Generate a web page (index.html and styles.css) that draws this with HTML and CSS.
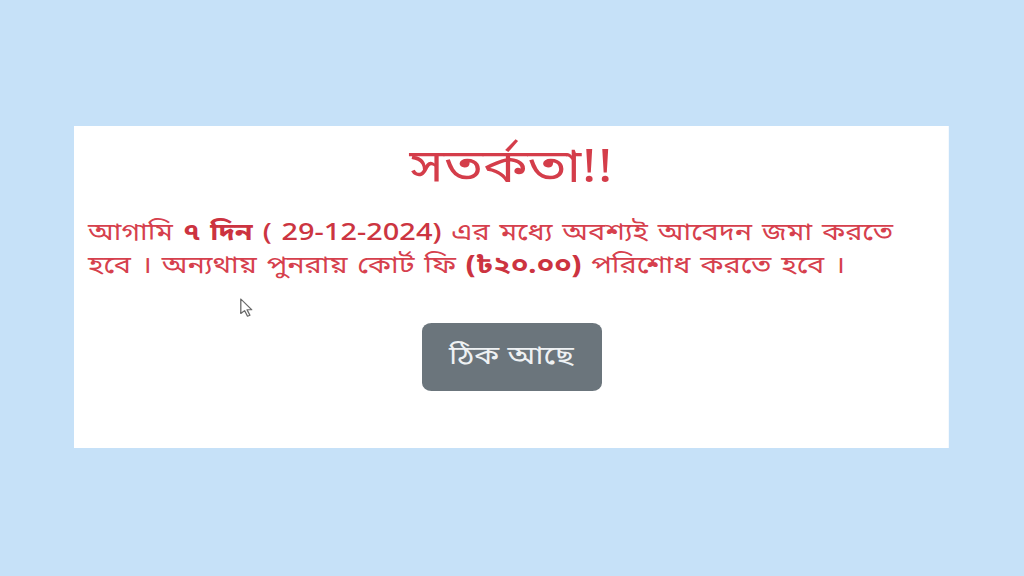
FILE: index.html
```html
<!DOCTYPE html>
<html lang="bn">
<head>
<meta charset="utf-8">
<link rel="stylesheet" href="styles.css">
</head>
<body>
<div class="page">
  <div class="modal">
    <h1 class="title">সতর্কতা!!</h1>
    <p class="message">আগামি <b>৭ দিন</b> <span class="date">( 29-12-2024)</span> এর মধ্যে অবশ্যই আবেদন জমা করতে হবে&nbsp;। অন্যথায় পুনরায় কোর্ট ফি <b>(৳২০.০০)</b> পরিশোধ করতে হবে&nbsp;।</p>
    <div class="actions">
      <button class="btn">ঠিক আছে</button>
    </div>
    <svg class="cursor" width="11" height="20" viewBox="0 0 11 20"><path d="M1 1 L1 15.5 L4.2 12.6 L6.6 18.2 L8.6 17.3 L6.2 11.8 L10.2 11.8 Z" fill="#ffffff" stroke="#6a6a6a" stroke-width="1.1" stroke-linejoin="round"/></svg>
  </div>
</div>
</body>
</html>
```
FILE: styles.css
```css
html, body {
  margin: 0;
  padding: 0;
}
body {
  background: #c6e1f8;
  width: 1024px;
  height: 576px;
  overflow: hidden;
  font-family: "Noto Sans Bengali", "Noto Sans", "Open Sans", sans-serif;
}
.page {
  padding-top: 126px;
  padding-left: 74px;
}
/* the reference is horizontally stretched by ~1.2 */
.modal {
  position: relative;
  width: 729px;
  height: 322px;
  background: #ffffff;
  box-sizing: border-box;
  padding: 17px 11.7px 0 11.7px;
  transform: scaleX(1.2);
  transform-origin: left top;
}
.title {
  margin: 0;
  text-align: center;
  color: #d43d4a;
  font-weight: 400;
  font-size: 46px;
  line-height: 56px;
}
.message {
  margin: 19px 0 0 0;
  padding-right: 20px;
  color: #d6404d;
  font-size: 24px;
  line-height: 33px;
  word-spacing: 2px;
}
.message b {
  font-weight: 700;
  color: #cc3340;
}
.date {
  font-weight: 500;
  color: #cc3541;
}
.actions {
  display: flex;
  justify-content: center;
  margin-top: 39px;
}
.btn {
  width: 150px;
  height: 68px;
  border: none;
  border-radius: 8px;
  background: #6b757c;
  color: #eef1f3;
  font-family: inherit;
  font-size: 26px;
  padding: 0;
}
.cursor {
  position: absolute;
  left: 138px;
  top: 172px;
}
```
